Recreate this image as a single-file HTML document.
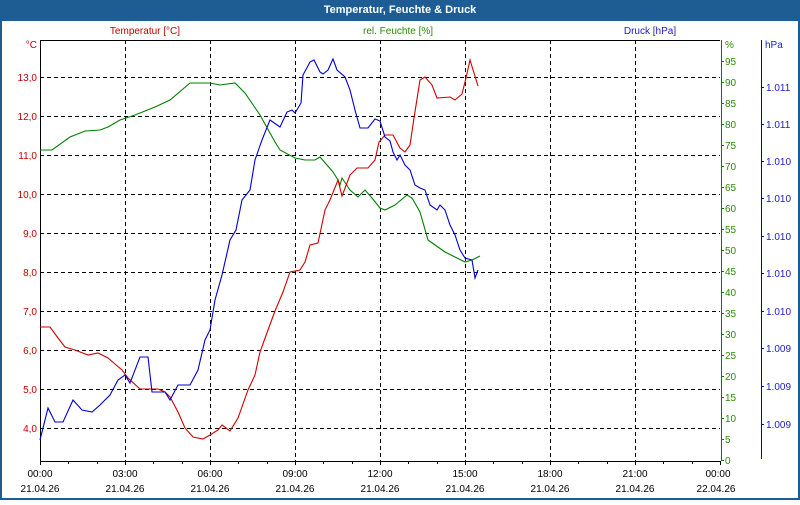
<!DOCTYPE html>
<html><head><meta charset="utf-8"><style>
html,body{margin:0;padding:0;background:#fff}
body{width:800px;height:500px;overflow:hidden;font-family:"Liberation Sans","DejaVu Sans",sans-serif}
</style></head><body>
<svg width="800" height="500" xmlns="http://www.w3.org/2000/svg" font-family="Liberation Sans, DejaVu Sans, sans-serif" font-size="10">
<rect x="0" y="0" width="800" height="500" fill="#1d5d94"/>
<rect x="2" y="21" width="796" height="477" fill="#fff"/>
<text x="400" y="13" text-anchor="middle" fill="#fff" font-weight="bold" font-size="11">Temperatur, Feuchte &amp; Druck</text>
<text x="145" y="34" text-anchor="middle" fill="#c00000">Temperatur [°C]</text>
<text x="398" y="34" text-anchor="middle" fill="#2a8a00">rel. Feuchte [%]</text>
<text x="650" y="34" text-anchor="middle" fill="#2020c0">Druck [hPa]</text>
<g stroke="#000" stroke-dasharray="4,3" stroke-width="1">
<path d="M125.5 40V461M210.5 40V461M295.5 40V461M380.5 40V461M465.5 40V461M550.5 40V461M635.5 40V461"/>
<path d="M40 77.5H720M40 116.5H720M40 155.5H720M40 194.5H720M40 233.5H720M40 272.5H720M40 311.5H720M40 350.5H720M40 389.5H720M40 428.5H720"/>
</g>
<path d="M40.5 40V461.5H720M40 40.5H720" stroke="#000" fill="none"/>
<g stroke="#000"><path d="M40.5 461v4M68.5 461v3M97.5 461v3M125.5 461v4M153.5 461v3M182.5 461v3M210.5 461v4M238.5 461v3M267.5 461v3M295.5 461v4M323.5 461v3M352.5 461v3M380.5 461v4M408.5 461v3M437.5 461v3M465.5 461v4M493.5 461v3M522.5 461v3M550.5 461v4M578.5 461v3M607.5 461v3M635.5 461v4M663.5 461v3M692.5 461v3M720.5 461v4"/></g>
<path d="M721.5 40V461" stroke="#008000"/>
<path d="M761.5 40V459" stroke="#0000c0"/>
<g fill="#c00000" text-anchor="end">
<text x="37" y="48">°C</text>
<text x="37" y="81">13,0</text><text x="37" y="120">12,0</text><text x="37" y="159">11,0</text><text x="37" y="198">10,0</text><text x="37" y="237">9,0</text><text x="37" y="276">8,0</text><text x="37" y="315">7,0</text><text x="37" y="354">6,0</text><text x="37" y="393">5,0</text><text x="37" y="432">4,0</text>
</g>
<g fill="#6a8a00" id="pct"></g>
<g stroke="#008000" id="pt"></g>
<g fill="#2020c0">
<text x="765" y="48">hPa</text>
<text x="766" y="91">1.011</text><text x="766" y="128">1.011</text><text x="766" y="165">1.010</text><text x="766" y="202">1.010</text><text x="766" y="240">1.010</text><text x="766" y="277">1.010</text><text x="766" y="315">1.010</text><text x="766" y="352">1.009</text><text x="766" y="390">1.009</text><text x="766" y="428">1.009</text>
</g>
<path stroke="#0000c0" d="M761 87.5h3M761 124.5h3M761 161.5h3M761 198.5h3M761 236.5h3M761 273.5h3M761 311.5h3M761 348.5h3M761 386.5h3M761 424.5h3"/>
<g fill="#000" text-anchor="middle">
<text x="40" y="477">00:00</text><text x="125" y="477">03:00</text><text x="210" y="477">06:00</text><text x="295" y="477">09:00</text><text x="380" y="477">12:00</text><text x="465" y="477">15:00</text><text x="550" y="477">18:00</text><text x="635" y="477">21:00</text><text x="718" y="477">00:00</text>
<text x="40" y="492">21.04.26</text><text x="125" y="492">21.04.26</text><text x="210" y="492">21.04.26</text><text x="295" y="492">21.04.26</text><text x="380" y="492">21.04.26</text><text x="465" y="492">21.04.26</text><text x="550" y="492">21.04.26</text><text x="635" y="492">21.04.26</text><text x="716" y="492">22.04.26</text>
</g>
<g fill="#2a8a00">
<text x="725" y="48">%</text>
<text x="725" y="65">95</text><text x="725" y="86">90</text><text x="725" y="107">85</text><text x="725" y="128">80</text><text x="725" y="149">75</text><text x="725" y="170">70</text><text x="725" y="191">65</text><text x="725" y="212">60</text><text x="725" y="233">55</text><text x="725" y="254">50</text><text x="725" y="275">45</text><text x="725" y="296">40</text><text x="725" y="317">35</text><text x="725" y="338">30</text><text x="725" y="359">25</text><text x="725" y="380">20</text><text x="725" y="401">15</text><text x="725" y="422">10</text><text x="725" y="443">5</text><text x="725" y="464">0</text>
</g>
<path stroke="#008000" d="M721 61.5h3M721 82.5h3M721 103.5h3M721 124.5h3M721 145.5h3M721 166.5h3M721 187.5h3M721 208.5h3M721 229.5h3M721 250.5h3M721 271.5h3M721 292.5h3M721 313.5h3M721 334.5h3M721 355.5h3M721 376.5h3M721 397.5h3M721 418.5h3M721 439.5h3M721 460.5h3"/>
<g fill="none" stroke-width="1.1">
<polyline stroke="#008000" points="40,150 52,150 70,137 85,131 100,130 108,127 120,120 135,115 155,107 170,100 190,83 210,83 220,85 235,83 245,93 260,115 275,142 280,150 295,158 305,160 315,160 320,157 333,172 338,180 340,185 342,178 350,190 358,197 365,190 372,198 380,208 385,210 395,205 407,195 412,198 420,212 428,240 435,245 445,252 455,257 465,262 472,260 480,256"/>
<polyline stroke="#d00000" points="40,327 50,327 58,338 65,347 75,350 88,355 98,353 108,358 115,364 122,370 128,378 140,389 158,389 165,392 170,397 178,412 185,428 193,437 203,439 210,435 218,430 222,425 230,431 238,418 248,390 255,375 260,352 268,330 275,311 283,292 290,272 300,270 305,262 310,245 318,243 325,210 330,200 338,180 342,196 350,175 357,168 368,168 375,160 379,142 385,135 393,135 400,148 405,152 410,145 414,118 420,80 425,77 432,85 437,98 450,97 455,100 462,94 466,78 470,60 478,86"/>
<polyline stroke="#0000d0" points="40,440 48,408 55,422 63,422 73,400 82,410 92,412 100,405 110,395 118,380 125,375 130,383 140,357 148,357 152,392 165,392 170,400 178,385 190,385 198,370 205,340 210,330 215,300 222,275 230,240 236,230 242,200 250,190 255,160 262,140 270,120 280,127 287,112 292,110 295,113 301,103 303,75 310,62 314,60 320,72 323,74 328,70 333,59 337,70 345,77 350,90 355,110 360,128 368,128 375,119 380,121 385,137 390,141 393,152 397,160 400,155 405,165 410,170 415,185 420,188 425,190 430,205 437,210 440,205 445,210 450,225 455,235 460,250 465,258 472,260 475,278 478,270"/>
</g>
</svg>
</body></html>
